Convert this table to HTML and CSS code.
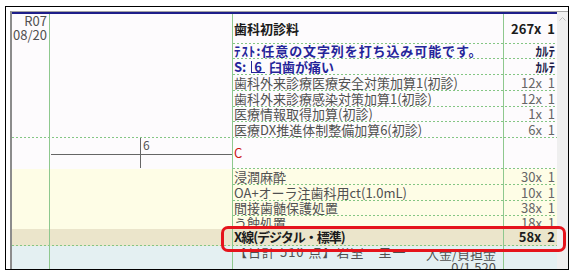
FILE: index.html
```html
<!DOCTYPE html>
<html lang="ja">
<head>
<meta charset="utf-8">
<title>カルテ</title>
<link rel="stylesheet" href="styles.css">
</head>
<body>
<div class="frame">
  <div class="window">
    <div class="panel">
      <section class="sec visit dots">
        <div class="date"><div>R07</div><div>08/20</div></div>
        <div class="chart"></div>
        <div class="rows">
          <div class="row dots h30"><div class="name strong">歯科初診料</div><div class="amt strong">267x 1</div></div>
          <div class="row dots h15"><div class="name blue wide">ﾃｽﾄ:任意の文字列を打ち込み可能です。</div><div class="amt karte">ｶﾙﾃ</div></div>
          <div class="row dots h16"><div class="name blue">S: <span class="tno">6</span> 臼歯が痛い</div><div class="amt karte">ｶﾙﾃ</div></div>
          <div class="row dots h16"><div class="name">歯科外来診療医療安全対策加算1(初診)</div><div class="amt">12x 1</div></div>
          <div class="row dots h16"><div class="name">歯科外来診療感染対策加算1(初診)</div><div class="amt">12x 1</div></div>
          <div class="row dots h15"><div class="name">医療情報取得加算(初診)</div><div class="amt">1x 1</div></div>
          <div class="row h16"><div class="name">医療DX推進体制整備加算6(初診)</div><div class="amt">6x 1</div></div>
        </div>
      </section>

      <section class="sec chartsec">
        <div class="date"></div>
        <div class="chart">
          <div class="tooth">
            <div class="q q1"></div>
            <div class="q q2">6</div>
            <div class="q q3"></div>
            <div class="q q4"></div>
          </div>
        </div>
        <div class="rows">
          <div class="row dots h31"><div class="name"><span class="red">C</span></div><div class="amt"></div></div>
        </div>
      </section>

      <section class="sec yellow">
        <div class="date"></div>
        <div class="chart"></div>
        <div class="rows">
          <div class="row dots h16"><div class="name">浸潤麻酔</div><div class="amt">30x 1</div></div>
          <div class="row dots h16"><div class="name">OA+オーラ注歯科用ct(1.0mL)</div><div class="amt">10x 1</div></div>
          <div class="row dots h15"><div class="name">間接歯髄保護処置</div><div class="amt">38x 1</div></div>
          <div class="row dots h13 clip"><div class="name"><span class="cut">う蝕処置</span></div><div class="amt"><span class="cut">18x 1</span></div></div>
        </div>
      </section>

      <section class="sec total dots">
        <div class="date"></div>
        <div class="chart"></div>
        <div class="rows">
          <div class="row h17"><div class="name strong tight">X線(デジタル・標準)</div><div class="amt strong">58x 2</div></div>
        </div>
      </section>

      <section class="sec footer">
        <div class="date"></div>
        <div class="chart"></div>
        <div class="fname">
          <div class="fleft"><span>【日計 510 点】岩室　圭一</span></div>
          <div class="fright"><span>入金/負担金<br>0/1,520</span></div>
        </div>
        <div class="famt"></div>
      </section>
    </div>
    <div class="scrollbar">
      <svg width="7" height="4" viewBox="0 0 7 4"><polyline points="0.5,3.5 3.5,0.5 6.5,3.5" fill="none" stroke="#b9b9b9" stroke-width="1"/></svg>
    </div>
  </div>
  <div class="highlight"></div>
</div>
</body>
</html>
```

FILE: styles.css
```css
* { box-sizing: border-box; }

html, body {
  margin: 0;
  padding: 0;
  background: #ffffff;
}

body {
  font-family: "Noto Sans CJK JP", "Noto Sans", sans-serif;
  font-size: 13px;
  line-height: 14px;
  color: #505050;
}

.frame {
  position: relative;
  margin: 6px 0 0 5px;
  width: 564px;
  height: 264px;
  border: 1px solid #000;
  padding: 4px 0 0 4px;
  background: #fff;
}

.window {
  display: flex;
  height: 100%;
  border-top: 1px solid #a3a3a3;
  border-left: 2px solid #8c8c8c;
}

.panel {
  width: 545px;
  flex: none;
  border-top: 2px solid #1e1e8a;
  background: #fdfbfd;
  overflow: hidden;
  display: flex;
  flex-direction: column;
}

.scrollbar {
  flex: 1;
  background: #efefef;
  display: flex;
  justify-content: center;
  align-items: flex-start;
  padding-top: 5px;
}

.scrollbar svg { display: block; }

.dots {
  background: repeating-linear-gradient(90deg, #84c684 0 2px, transparent 2px 4px) left bottom / 100% 1px no-repeat;
}

.sec {
  display: grid;
  grid-template-columns: 38px 183px 271px 53px;
  flex: none;
}

.sec > .date,
.sec > .chart,
.sec > .fname {
  border-right: 1px solid #8ec88e;
}

.visit { height: 124px; }
.chartsec { height: 31px; }
.yellow { height: 60px; background: #fefde6; }
.total {
  height: 17px;
  background: repeating-linear-gradient(90deg, #84c684 0 2px, transparent 2px 4px) left bottom / 100% 1px no-repeat, #ebe5cb;
}
.footer { flex: 1; background: #e4f0f2; overflow: hidden; }

.date {
  text-align: right;
  padding-right: 2px;
  color: #505050;
}

.rows {
  grid-column: 3 / 5;
  display: flex;
  flex-direction: column;
}

.row {
  display: grid;
  grid-template-columns: 271px 53px;
  flex: none;
}

.h13 { height: 13px; }
.h15 { height: 15px; }
.h16 { height: 16px; }
.h17 { height: 17px; }
.h30 { height: 30px; }
.h31 { height: 31px; }

.row > .name {
  border-right: 1px solid #8ec88e;
  display: flex;
  align-items: center;
  padding: 0 0 1px 1px;
  white-space: nowrap;
  overflow: hidden;
}

.row > .amt {
  display: flex;
  align-items: center;
  justify-content: flex-end;
  padding: 0 2px 1px 0;
  white-space: pre;
  word-spacing: 3px;
  color: #666;
}

.strong { font-weight: bold; color: #1b1b1b !important; }
.blue { font-weight: bold; color: #25259a; }
.wide { letter-spacing: 0.9px; }
.karte { font-weight: bold; color: #1d1d4a !important; }
.red { color: #cc1515; }
.tight { letter-spacing: -1px; }

.tno {
  display: inline-block;
  border-left: 1px solid #25259a;
  border-bottom: 1px solid #25259a;
  line-height: 11px;
  padding: 0 3px 0 2px;
  margin: 0 4px 0 5px;
}

.clip > .name,
.clip > .amt { align-items: flex-start; padding-bottom: 0; }
.cut { display: block; height: 10px; overflow: hidden; }

.tooth {
  display: grid;
  grid-template-columns: 90px 1fr;
  grid-template-rows: 17px 13px;
  margin-left: 1px;
}

.q1 { border-right: 1px solid #666; border-bottom: 1px solid #666; }
.q2 {
  border-bottom: 1px solid #666;
  font-size: 12px;
  line-height: 12px;
  padding: 1px 0 0 2px;
  color: #555;
}
.q3 { border-right: 1px solid #666; }

.fname {
  display: flex;
  justify-content: space-between;
  align-items: flex-start;
  padding-left: 1px;
  overflow: hidden;
}

.fleft {
  margin-top: 2px;
  height: 20px;
  overflow: hidden;
  white-space: nowrap;
  letter-spacing: 1px;
}
.fleft span { display: block; margin-top: -3px; }

.fright {
  margin-top: 5px;
  padding-right: 7px;
  text-align: right;
  overflow: hidden;
  white-space: nowrap;
}
.fright span { display: block; margin-top: -4px; }

.highlight {
  position: absolute;
  left: 215px;
  top: 219px;
  width: 345px;
  height: 26px;
  border: 3px solid #e5141c;
  border-radius: 7px;
  pointer-events: none;
}
```
